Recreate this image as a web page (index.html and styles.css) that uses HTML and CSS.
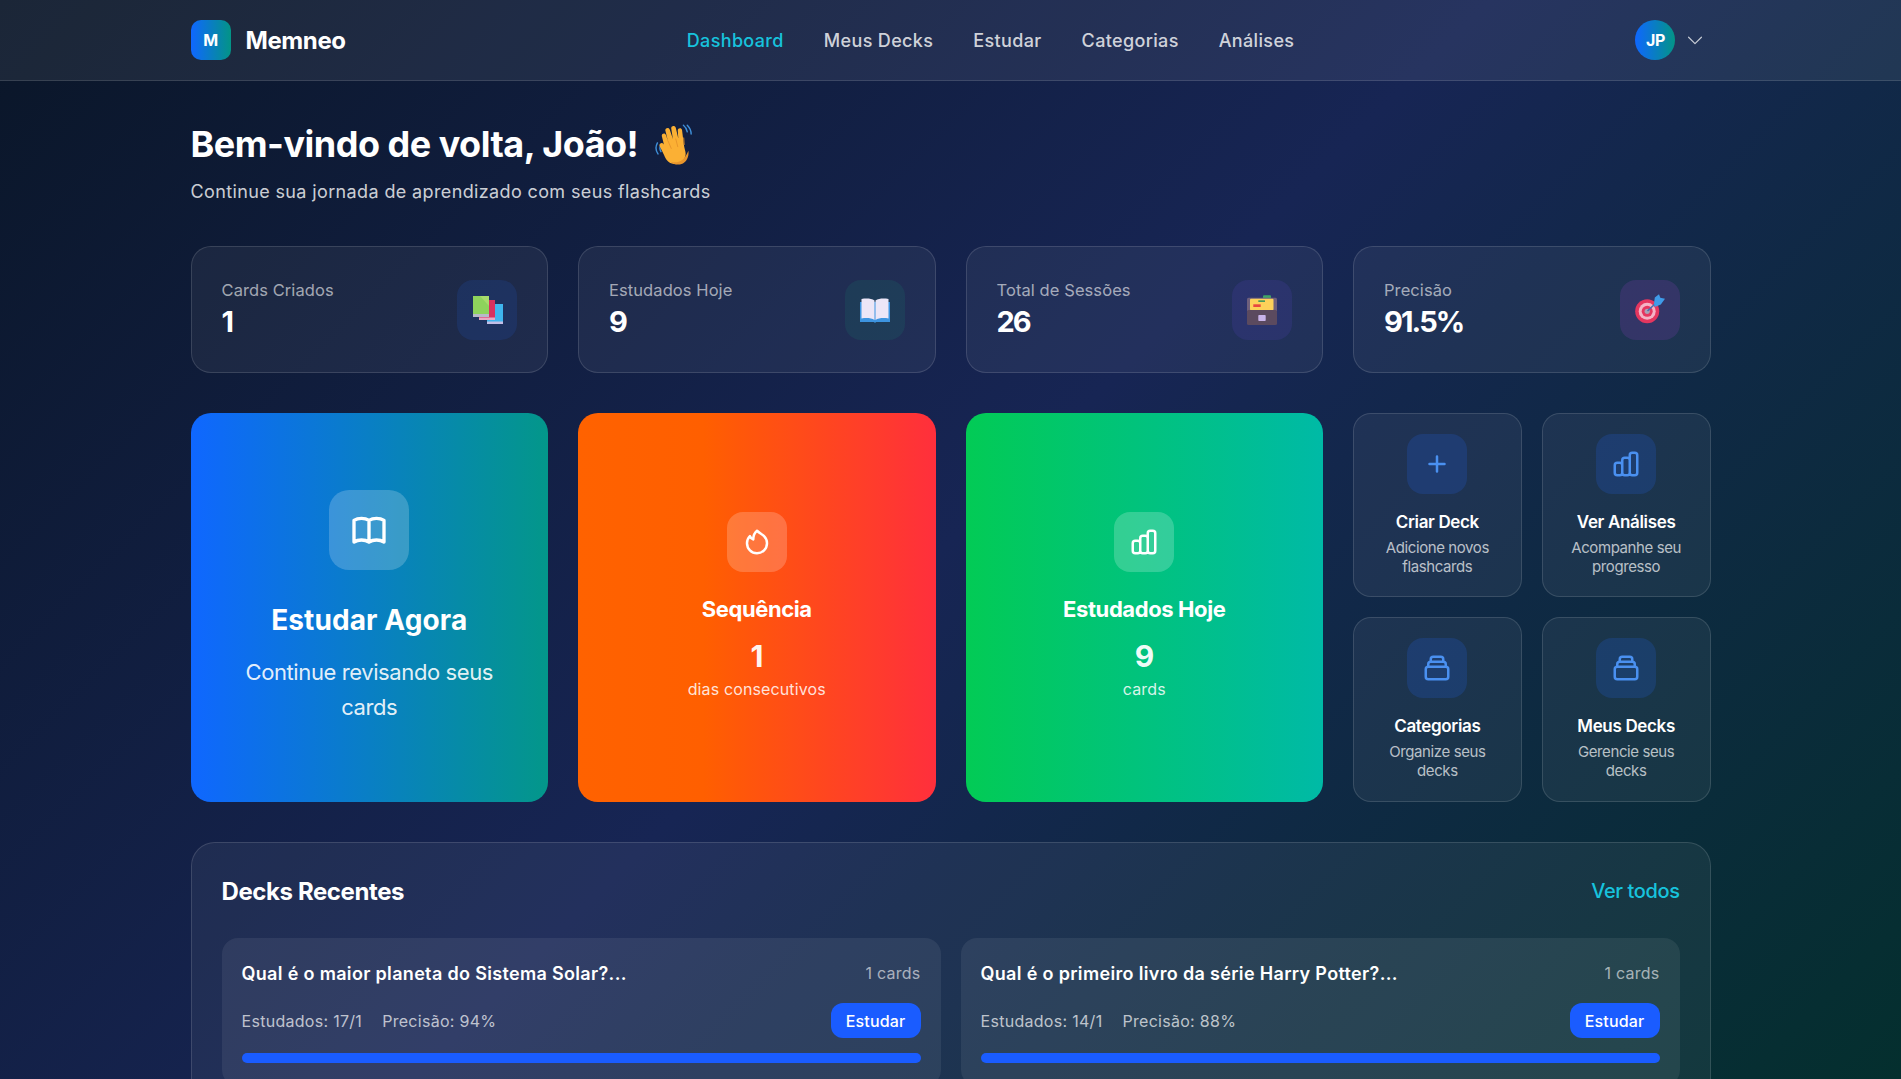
FILE: index.html
```html
<!DOCTYPE html>
<html lang="pt-BR">
<head>
<meta charset="utf-8">
<title>Memneo</title>
<link rel="stylesheet" href="styles.css">
</head>
<body>
<header class="topbar">
  <div class="wrap topbar-in">
    <div class="brand"><span class="brand-mark">M</span><span class="brand-name">Memneo</span></div>
    <nav class="links">
      <a class="link active">Dashboard</a>
      <a class="link">Meus Decks</a>
      <a class="link">Estudar</a>
      <a class="link">Categorias</a>
      <a class="link">Análises</a>
    </nav>
    <div class="user">
      <span class="avatar">JP</span>
      <svg class="chev" viewBox="0 0 24 24" fill="none" stroke="currentColor" stroke-width="1.3" stroke-linecap="round" stroke-linejoin="round"><path d="M19 9l-7 7-7-7"/></svg>
    </div>
  </div>
</header>
<main class="wrap">
  <section class="hello">
    <h1 class="hello-title"><span>Bem-vindo de volta, João!</span>
      <svg class="wave" viewBox="4 1 34 38"><path d="M6 19c-1.600 3-1.600 7 .5 10M9 21c-1 2-1 4 .2 6" fill="none" stroke="#3f8fd8" stroke-width="1.300" stroke-linecap="round"/><path d="M33 3c2 2 3.500 4.500 3.500 8M29.500 3c2 1.500 3 3 3.500 6" fill="none" stroke="#3f8fd8" stroke-width="1.300" stroke-linecap="round"/><path d="M12 21l-2-8c-.6-2.500 3-3.500 3.800-1l1.700 5-2.300-9c-.6-2.500 3.200-3.500 4-1l2.800 8.500-1.500-9.500c-.4-2.600 3.500-3.200 4.100-.6l2.300 9.600-.5-7c-.2-2.600 3.500-3 3.900-.4l1.600 13c.6 4.500 2.500 7 1.200 11-1.500 5-6.500 8-12 6-4-1.400-5.500-4-7-7.500l-4-8c-1.200-2.400 2-4.300 3.500-2z" fill="#fbb034"/><path d="M15.500 17l3 7M22.600 15.400l1.800 7M29.800 14.500l.4 6" fill="none" stroke="#e5922a" stroke-width=".8" stroke-linecap="round"/><path d="M34 26c.3 2.500.2 4-.5 6-1.500 5-6.500 8-12 6-1.500-.5-2.600-1.200-3.600-2 6 1.500 12 .5 16.100-10z" fill="#e8952c"/></svg>
    </h1>
    <p class="hello-sub">Continue sua jornada de aprendizado com seus flashcards</p>
  </section>

  <section class="stats">
    <article class="glass stat">
      <div><div class="stat-label">Cards Criados</div><div class="stat-value">1</div></div>
      <div class="stat-icon tint-blue"><svg viewBox="0 0 32 32"><path d="M16 10h16v20H16z" fill="#3fb5ee"/><path d="M16 27.500h16V30H16z" fill="#c3bde6"/><path d="M8 6h16v20H8z" fill="#d8315f"/><path d="M8 23.500h16V26H8z" fill="#e8a8c4"/><path d="M2 2h16v21H2z" fill="#8ed35c"/><path d="M18 2v10L9 2z" fill="#a7dc6c"/><path d="M2 20h16v3H2z" fill="#b7b9c9"/></svg></div>
    </article>
    <article class="glass stat">
      <div><div class="stat-label">Estudados Hoje</div><div class="stat-value">9</div></div>
      <div class="stat-icon tint-green"><svg viewBox="0 0 32 32"><path d="M1 8h30v20H17l-1 1-1-1H1z" fill="#3d94e0"/><path d="M2.500 5c5-1 10-.5 13 1.500V26c-3-2-8-2.500-13-1.500z" fill="#ece6f7"/><path d="M29.500 5c-5-1-10-.5-13 1.500V26c3-2 8-2.500 13-1.500z" fill="#ece6f7"/></svg></div>
    </article>
    <article class="glass stat">
      <div><div class="stat-label">Total de Sessões</div><div class="stat-value">26</div></div>
      <div class="stat-icon tint-indigo"><svg viewBox="0 0 32 32"><rect x="17" y="1.300" width="8" height="3.500" rx="1" fill="#3fa565"/><rect x="1" y="3.700" width="30" height="14" rx="1.500" fill="#6e5f7c"/><rect x="4" y="4.700" width="23.500" height="11.500" rx="1" fill="#fdd15a"/><rect x="12.300" y="6.300" width="6.700" height="1.700" fill="#4a9a5c"/><rect x="7.300" y="10.300" width="7.400" height="2.700" fill="#e8473f"/><rect x="1" y="16" width="30" height="15" rx="1.500" fill="#5b4a5f"/><rect x="12.300" y="21" width="7.400" height="6" rx=".8" fill="#c8b3ea"/></svg></div>
    </article>
    <article class="glass stat">
      <div><div class="stat-label">Precisão</div><div class="stat-value">91.5%</div></div>
      <div class="stat-icon tint-purple"><svg viewBox="0 0 32 32"><circle cx="13.200" cy="17.300" r="12" fill="#e5365f"/><circle cx="13.200" cy="17.300" r="8.500" fill="#f4b3c5"/><circle cx="13.200" cy="17.300" r="5.500" fill="#e5365f"/><circle cx="13.200" cy="17.300" r="2.600" fill="#a8a3b5"/><path d="M13.500 17L24 7" stroke="#4a6fb0" stroke-width="1.600"/><path d="M20 9.500l.8-6 4.200-3.200 1.300 3.400 4.700 1-4.200 5.800-6 2.500z" fill="#3f9be8"/></svg></div>
    </article>
  </section>

  <section class="features">
    <article class="hero hero-blue">
      <div class="hero-icon big"><svg viewBox="0 0 24 24" fill="none" stroke="#fff" stroke-width="2" stroke-linecap="round" stroke-linejoin="round"><path d="M12 6.253v13m0-13C10.832 5.477 9.246 5 7.500 5S4.168 5.477 3 6.253v13C4.168 18.477 5.754 18 7.500 18s3.332.477 4.500 1.253m0-13C13.168 5.477 14.754 5 16.500 5c1.747 0 3.332.477 4.500 1.253v13C19.832 18.477 18.247 18 16.500 18c-1.746 0-3.332.477-4.500 1.253"/></svg></div>
      <h2 class="hero-big-title">Estudar Agora</h2>
      <p class="hero-big-sub">Continue revisando seus cards</p>
    </article>
    <article class="hero hero-orange">
      <div class="hero-icon"><svg viewBox="0 0 24 24" fill="none" stroke="#fff" stroke-width="2" stroke-linecap="round" stroke-linejoin="round"><path d="M17.657 18.657A8 8 0 016.343 7.343S7 9 9 10c0-2 .5-5 2.986-7C14 5 16.090 5.777 17.656 7.343A7.975 7.975 0 0120 13a7.975 7.975 0 01-2.343 5.657z"/></svg></div>
      <h2 class="hero-title">Sequência</h2>
      <div class="hero-num">1</div>
      <p class="hero-note">dias consecutivos</p>
    </article>
    <article class="hero hero-green">
      <div class="hero-icon"><svg viewBox="0 0 24 24" fill="none" stroke="#fff" stroke-width="2" stroke-linecap="round" stroke-linejoin="round"><path d="M9 19v-6a2 2 0 00-2-2H5a2 2 0 00-2 2v6a2 2 0 002 2h2a2 2 0 002-2zm0 0V9a2 2 0 012-2h2a2 2 0 012 2v10m-6 0a2 2 0 002 2h2a2 2 0 002-2m0 0V5a2 2 0 012-2h2a2 2 0 012 2v14a2 2 0 01-2 2h-2a2 2 0 01-2-2z"/></svg></div>
      <h2 class="hero-title">Estudados Hoje</h2>
      <div class="hero-num">9</div>
      <p class="hero-note">cards</p>
    </article>
    <div class="actions">
      <article class="glass action">
        <div class="action-icon"><svg viewBox="0 0 24 24" fill="none" stroke="currentColor" stroke-width="2" stroke-linecap="round" stroke-linejoin="round"><path d="M12 6v6m0 0v6m0-6h6m-6 0H6"/></svg></div>
        <h3 class="action-title">Criar Deck</h3>
        <p class="action-desc">Adicione novos flashcards</p>
      </article>
      <article class="glass action">
        <div class="action-icon"><svg viewBox="0 0 24 24" fill="none" stroke="currentColor" stroke-width="2" stroke-linecap="round" stroke-linejoin="round"><path d="M9 19v-6a2 2 0 00-2-2H5a2 2 0 00-2 2v6a2 2 0 002 2h2a2 2 0 002-2zm0 0V9a2 2 0 012-2h2a2 2 0 012 2v10m-6 0a2 2 0 002 2h2a2 2 0 002-2m0 0V5a2 2 0 012-2h2a2 2 0 012 2v14a2 2 0 01-2 2h-2a2 2 0 01-2-2z"/></svg></div>
        <h3 class="action-title">Ver Análises</h3>
        <p class="action-desc">Acompanhe seu progresso</p>
      </article>
      <article class="glass action">
        <div class="action-icon"><svg viewBox="0 0 24 24" fill="none" stroke="currentColor" stroke-width="2" stroke-linecap="round" stroke-linejoin="round"><path d="M19 11H5m14 0a2 2 0 012 2v6a2 2 0 01-2 2H5a2 2 0 01-2-2v-6a2 2 0 012-2m14 0V9a2 2 0 00-2-2M5 11V9a2 2 0 012-2m0 0V5a2 2 0 012-2h6a2 2 0 012 2v2M7 7h10"/></svg></div>
        <h3 class="action-title">Categorias</h3>
        <p class="action-desc">Organize seus decks</p>
      </article>
      <article class="glass action">
        <div class="action-icon"><svg viewBox="0 0 24 24" fill="none" stroke="currentColor" stroke-width="2" stroke-linecap="round" stroke-linejoin="round"><path d="M19 11H5m14 0a2 2 0 012 2v6a2 2 0 01-2 2H5a2 2 0 01-2-2v-6a2 2 0 012-2m14 0V9a2 2 0 00-2-2M5 11V9a2 2 0 012-2m0 0V5a2 2 0 012-2h6a2 2 0 012 2v2M7 7h10"/></svg></div>
        <h3 class="action-title">Meus Decks</h3>
        <p class="action-desc">Gerencie seus decks</p>
      </article>
    </div>
  </section>

  <section class="glass recent">
    <div class="recent-head">
      <h2 class="recent-title">Decks Recentes</h2>
      <a class="recent-all">Ver todos</a>
    </div>
    <div class="decks">
      <article class="deck">
        <div class="deck-top"><h3 class="deck-title">Qual é o maior planeta do Sistema Solar?...</h3><span class="deck-count">1 cards</span></div>
        <div class="deck-mid"><div class="deck-meta"><span>Estudados: 17/1</span><span>Precisão: 94%</span></div><button class="deck-btn">Estudar</button></div>
        <div class="bar"></div>
      </article>
      <article class="deck">
        <div class="deck-top"><h3 class="deck-title">Qual é o primeiro livro da série Harry Potter?...</h3><span class="deck-count">1 cards</span></div>
        <div class="deck-mid"><div class="deck-meta"><span>Estudados: 14/1</span><span>Precisão: 88%</span></div><button class="deck-btn">Estudar</button></div>
        <div class="bar"></div>
      </article>
    </div>
  </section>
</main>
</body>
</html>
```
FILE: styles.css
```css
* { box-sizing: border-box; margin: 0; padding: 0; }
html { height: 100%; overflow: hidden; }
body {
  height: 100%;
  overflow: hidden;
  font-family: Inter, "Noto Sans", sans-serif;
  letter-spacing: -0.4px;
  color: #fff;
  background: linear-gradient(135deg, #0a1628 0%, #172554 50%, #042f2e 100%);
}
.wrap { width: 1520px; margin: 0 auto; }
.topbar { height: 81px; background: rgba(255,255,255,.07); border-bottom: 1px solid rgba(255,255,255,.12); }
.topbar-in { height: 80px; display: flex; align-items: center; justify-content: space-between; }
.brand { display: flex; align-items: center; gap: 15px; }
.brand-mark { width: 40px; height: 40px; border-radius: 10px; display: flex; align-items: center; justify-content: center; font-size: 16px; font-weight: 700; background: linear-gradient(90deg, #0f67ff, #039486); }
.brand-name { font-size: 24px; font-weight: 700; }
.links { display: flex; gap: 40px; letter-spacing: .35px; }
.link { font-size: 18px; font-weight: 500; color: rgba(255,255,255,.8); }
.link.active { color: #17c3dd; }
.user { display: flex; align-items: center; gap: 9px; padding-right: 4px; }
.avatar { width: 40px; height: 40px; border-radius: 50%; display: flex; align-items: center; justify-content: center; font-size: 16px; font-weight: 700; background: linear-gradient(90deg, #0f67ff, #039486); }
.chev { width: 22px; height: 22px; color: rgba(255,255,255,.75); }
.hello { padding-top: 40px; height: 165px; }
.hello-title { display: flex; align-items: center; gap: 16px; font-size: 36px; line-height: 46px; font-weight: 700; letter-spacing: -.5px; }
.wave { width: 40px; height: 42px; }
.hello-sub { margin-top: 11px; font-size: 18px; line-height: 28px; letter-spacing: .37px; color: rgba(255,255,255,.8); }
.glass { background: rgba(255,255,255,.055); border: 1px solid rgba(255,255,255,.13); }
.stats { display: grid; grid-template-columns: repeat(4, 1fr); gap: 30px; }
.stat { height: 127px; border-radius: 20px; padding: 0 30px; display: flex; align-items: center; justify-content: space-between; }
.stat-label { font-size: 16.500px; line-height: 25px; letter-spacing: .08px; color: rgba(255,255,255,.6); }
.stat-value { font-size: 29px; line-height: 38px; font-weight: 700; letter-spacing: -1.900px; }
.stat-icon { width: 60px; height: 60px; border-radius: 16px; display: flex; align-items: center; justify-content: center; }
.stat-icon svg { width: 32px; height: 32px; }
.tint-blue { background: rgba(37,99,235,.14); }
.tint-green { background: rgba(16,185,129,.1); }
.tint-indigo { background: rgba(99,70,220,.14); }
.tint-purple { background: rgba(168,70,220,.16); }
.features { display: grid; grid-template-columns: repeat(4, 1fr); gap: 30px; margin-top: 40px; height: 389px; }
.hero { border-radius: 20px; padding: 40px; display: flex; flex-direction: column; align-items: center; justify-content: center; text-align: center; }
.hero-blue { background: linear-gradient(90deg, #0f67ff, #03978a); }
.hero-orange { background: linear-gradient(90deg, #ff6200, #ff5f00 35%, #ff2f3c); }
.hero-green { background: linear-gradient(90deg, #02cb55, #00baa6); }
.hero-icon { width: 60px; height: 60px; border-radius: 16px; background: rgba(255,255,255,.2); display: flex; align-items: center; justify-content: center; }
.hero-icon svg { width: 30px; height: 30px; }
.hero-icon.big { width: 80px; height: 80px; border-radius: 20px; }
.hero-icon.big svg { width: 40px; height: 40px; }
.hero-big-title { margin-top: 30px; font-size: 28px; line-height: 40px; font-weight: 700; letter-spacing: .1px; }
.hero-big-sub { margin-top: 15px; font-size: 22px; line-height: 35px; color: rgba(255,255,255,.9); }
.hero-title { margin-top: 23px; font-size: 22px; line-height: 28px; font-weight: 700; }
.hero-num { margin-top: 15px; font-size: 30px; line-height: 36px; font-weight: 700; color: rgba(255,255,255,.95); }
.hero-note { margin: 3px 0 3px; font-size: 16px; line-height: 24px; letter-spacing: .13px; color: rgba(255,255,255,.85); }
.actions { display: grid; grid-template-columns: 1fr 1fr; grid-template-rows: 184px 185px; gap: 20px; }
.action { border-radius: 18px; padding: 20px; display: flex; flex-direction: column; align-items: center; text-align: center; }
.action-icon { width: 60px; height: 60px; border-radius: 16px; color: #4a90f0; background: rgba(37,99,235,.2); display: flex; align-items: center; justify-content: center; flex: none; }
.action-icon svg { width: 30px; height: 30px; }
.action-title { margin-top: 16px; font-size: 17px; line-height: 24px; font-weight: 600; letter-spacing: -.34px; }
.action-desc { margin-top: 4px; font-size: 15px; line-height: 19px; color: rgba(255,255,255,.7); }
.recent { margin-top: 40px; border-radius: 24px; padding: 30px; height: 300px; }
.recent-head { display: flex; align-items: center; justify-content: space-between; height: 36px; }
.recent-title { font-size: 24px; font-weight: 700; }
.recent-all { font-size: 20px; font-weight: 500; color: #17c3dd; }
.decks { display: grid; grid-template-columns: 1fr 1fr; gap: 20px; margin-top: 29px; }
.deck { background: rgba(255,255,255,.07); border-radius: 16px; padding: 20px; height: 148px; }
.deck-top { display: flex; align-items: center; justify-content: space-between; height: 30px; }
.deck-title { font-size: 18px; font-weight: 600; letter-spacing: .33px; }
.deck-count { font-size: 16px; letter-spacing: .24px; color: rgba(255,255,255,.6); }
.deck-mid { display: flex; align-items: center; justify-content: space-between; margin-top: 15px; }
.deck-meta { display: flex; gap: 20px; font-size: 16px; letter-spacing: .29px; color: rgba(255,255,255,.7); }
.deck-btn { width: 90px; height: 35px; border: 0; border-radius: 12px; background: #1a5cff; color: #fff; font: inherit; font-size: 16px; font-weight: 500; letter-spacing: .16px; }
.bar { margin-top: 15px; height: 10px; border-radius: 5px; background: #1a5cff; }
```
